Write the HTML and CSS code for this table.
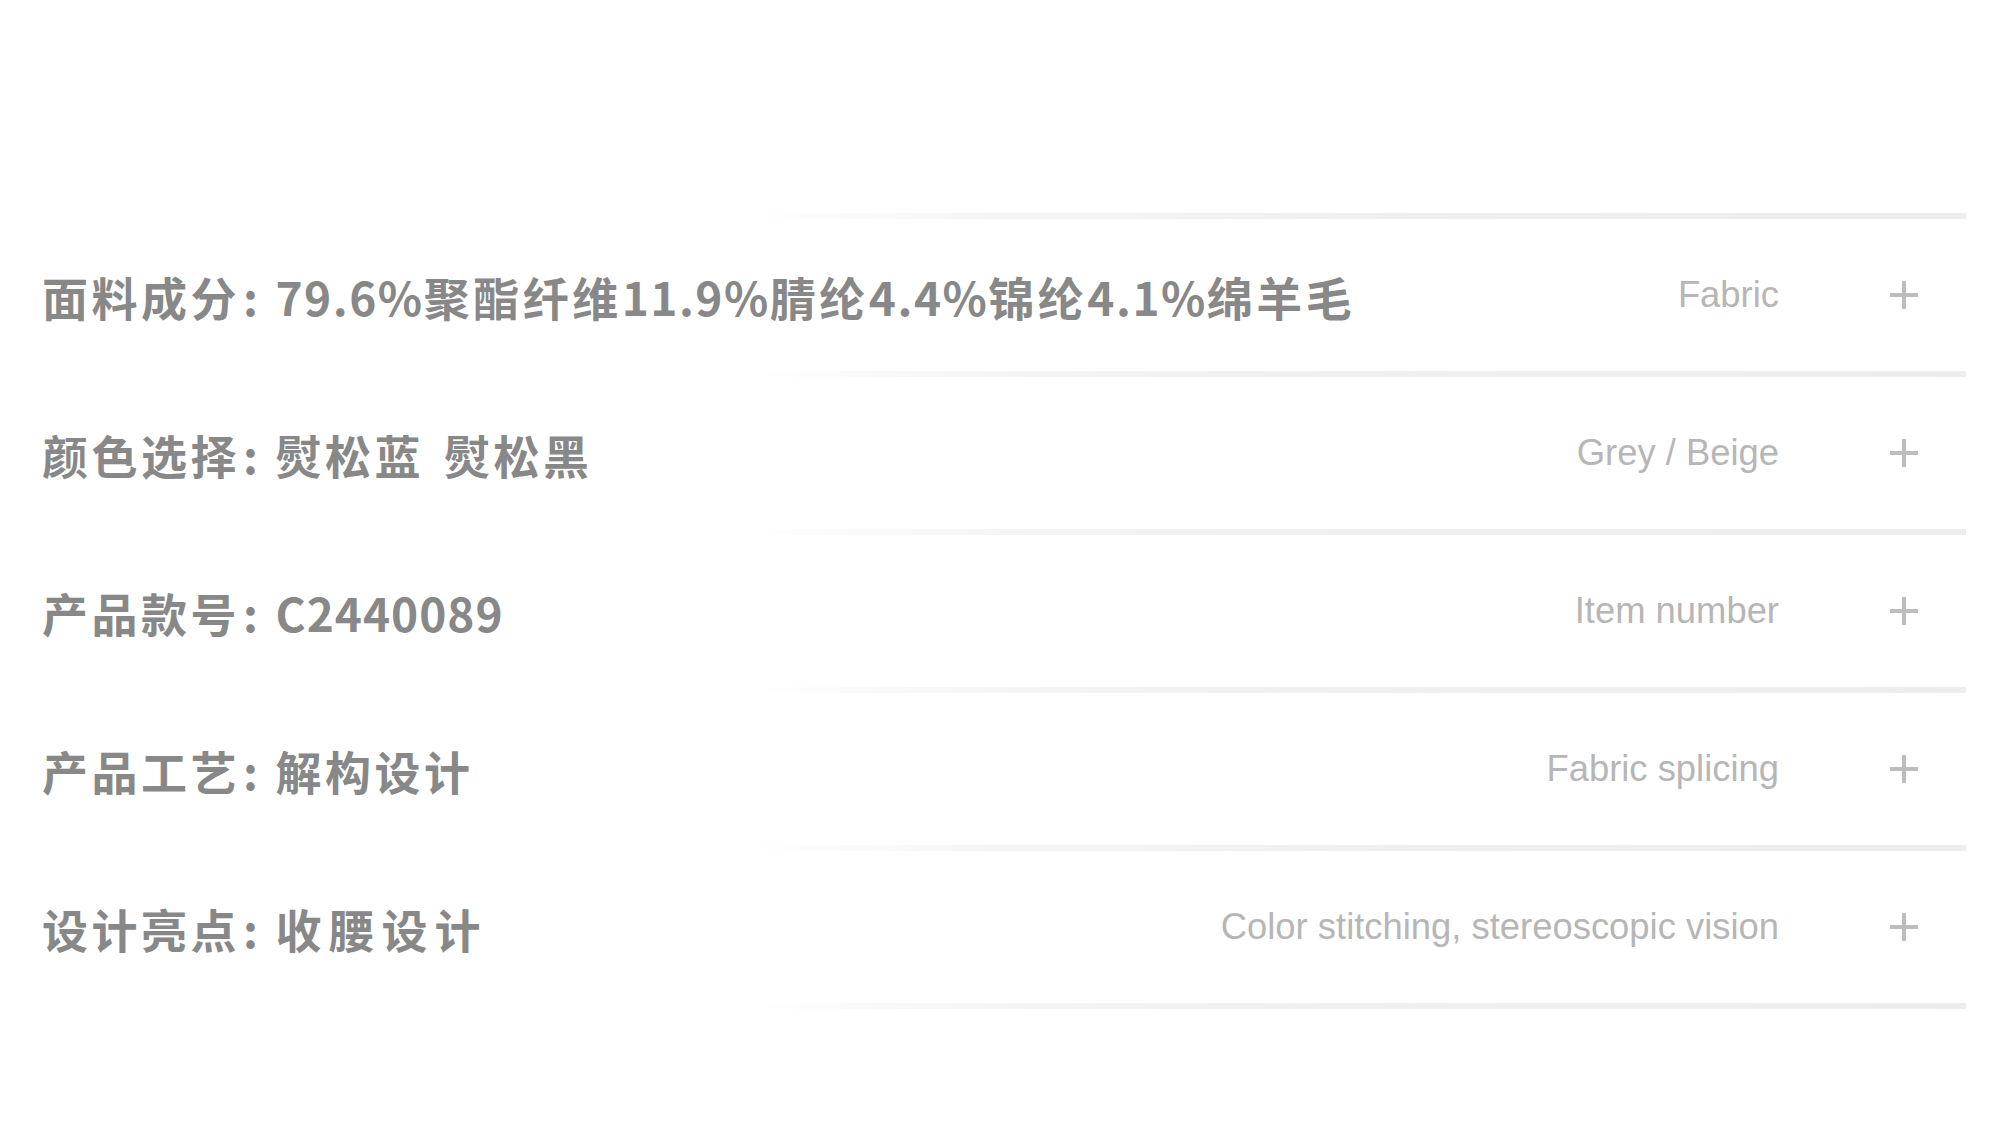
FILE: index.html
```html
<!DOCTYPE html>
<html lang="zh">
<head>
<meta charset="utf-8">
<title>产品信息</title>
<link rel="stylesheet" href="styles.css">
</head>
<body>
<div class="spec-list">
  <div class="divider"></div>
  <div class="spec-row">
    <span class="spec-cn">面料成分<span class="colon">:</span><span class="num">79.6%</span>聚酯纤维<span class="num">11.9%</span>腈纶<span class="num">4.4%</span>锦纶<span class="num">4.1%</span>绵羊毛</span>
    <span class="spec-en">Fabric</span>
    <span class="plus"></span>
  </div>
  <div class="divider"></div>
  <div class="spec-row">
    <span class="spec-cn">颜色选择<span class="colon">:</span>熨松蓝<span class="gap"></span>熨松黑</span>
    <span class="spec-en">Grey / Beige</span>
    <span class="plus"></span>
  </div>
  <div class="divider"></div>
  <div class="spec-row">
    <span class="spec-cn">产品款号<span class="colon">:</span><span class="num code">C2440089</span></span>
    <span class="spec-en">Item number</span>
    <span class="plus"></span>
  </div>
  <div class="divider"></div>
  <div class="spec-row">
    <span class="spec-cn">产品工艺<span class="colon">:</span>解构设计</span>
    <span class="spec-en">Fabric splicing</span>
    <span class="plus"></span>
  </div>
  <div class="divider"></div>
  <div class="spec-row">
    <span class="spec-cn">设计亮点<span class="colon">:</span><span class="wide">收腰设计</span></span>
    <span class="spec-en">Color stitching, stereoscopic vision</span>
    <span class="plus"></span>
  </div>
  <div class="divider"></div>
</div>
</body>
</html>
```

FILE: styles.css
```css
html, body {
  margin: 0;
  padding: 0;
  background: #ffffff;
}

body {
  width: 2000px;
  height: 1125px;
  overflow: hidden;
}

.spec-list {
  padding-top: 213px;
  width: 1966px;
  display: flex;
  flex-direction: column;
}

.divider {
  height: 6px;
  background: linear-gradient(to right,
    rgba(238, 238, 238, 0) 0%,
    rgba(238, 238, 238, 0) 38%,
    rgba(240, 240, 240, 0.75) 52%,
    #efefef 72%,
    #ededed 100%);
}

.spec-row {
  height: 152px;
  display: flex;
  align-items: center;
  padding-left: 42px;
}

.spec-cn {
  flex: 1;
  font-family: "Noto Sans CJK SC", "Noto Sans", sans-serif;
  font-weight: 700;
  font-size: 46px;
  letter-spacing: 3.5px;
  color: #888888;
  padding-top: 2px;
  white-space: nowrap;
}

.colon {
  margin-left: 3px;
  margin-right: 14px;
}

.num {
  letter-spacing: 1.5px;
}

.code {
  letter-spacing: 1px;
}

.gap {
  display: inline-block;
  width: 20px;
}

.wide {
  letter-spacing: 7px;
}

.spec-en {
  font-family: "Liberation Sans", Arial, sans-serif;
  font-size: 36.4px;
  color: #b6b6b6;
  white-space: nowrap;
}

.plus {
  position: relative;
  width: 28px;
  height: 28px;
  margin-left: 111px;
  margin-right: 48px;
  flex: none;
}

.plus::before,
.plus::after {
  content: "";
  position: absolute;
  background: #bdbdbd;
}

.plus::before {
  left: 0;
  right: 0;
  top: 12px;
  height: 4px;
}

.plus::after {
  top: 0;
  bottom: 0;
  left: 12px;
  width: 4px;
}
```
